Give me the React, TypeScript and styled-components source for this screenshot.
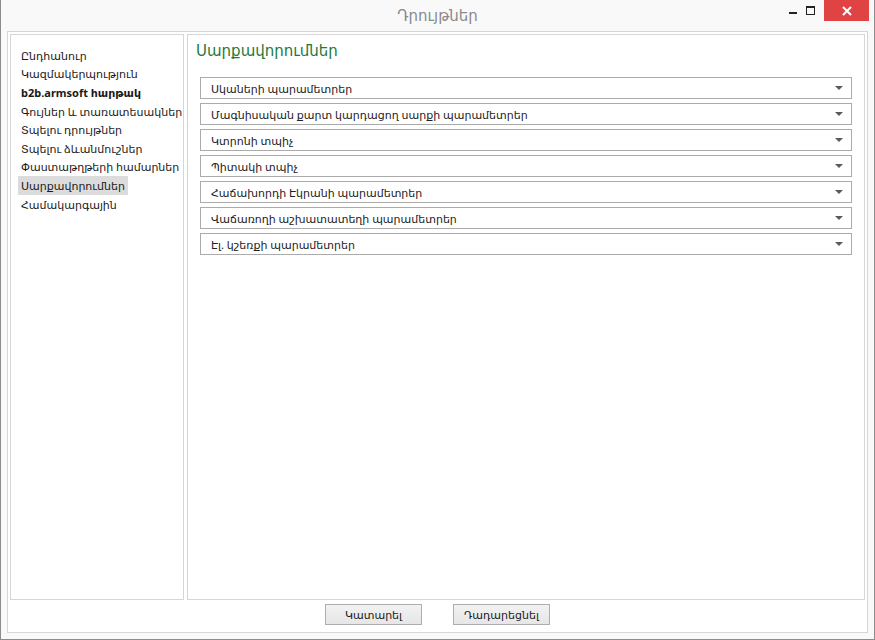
import { createGlobalStyle, styled } from "styled-components";

const GlobalStyle = createGlobalStyle`
  html, body {
    margin: 0;
    padding: 0;
    background: #ffffff;
  }
  body {
    font-family: "Noto Sans", "DejaVu Sans", sans-serif;
  }
`;

const Window = styled.div`
  width: 875px;
  height: 640px;
  box-sizing: border-box;
  border: 1px solid #8c8c8c;
  border-top: none;
  background: #f9f9f9;
  display: flex;
  flex-direction: column;
`;

const TitleBar = styled.div`
  height: 31px;
  flex: none;
  position: relative;
  display: flex;
  align-items: center;
  justify-content: center;
`;

const Title = styled.span`
  font-size: 15px;
  color: #8a8a8a;
  margin-top: -2px;
`;

const WindowControls = styled.div`
  position: absolute;
  top: 0;
  right: 5px;
  display: flex;
  align-items: flex-start;
  height: 21px;
`;

const ControlButton = styled.div`
  width: 16px;
  height: 21px;
  display: flex;
  align-items: center;
  justify-content: center;
  margin-right: 1px;
`;

const MinimizeGlyph = styled.div`
  width: 8px;
  height: 2px;
  background: #222;
  margin-top: 5px;
`;

const MaximizeGlyph = styled.div`
  width: 7px;
  height: 6px;
  border: 1px solid #222;
  border-top-width: 2px;
`;

const CloseButton = styled.div`
  width: 45px;
  height: 21px;
  margin-left: 5px;
  background: #e04343;
  display: flex;
  align-items: center;
  justify-content: center;
`;

const Body = styled.div`
  flex: 1;
  padding: 0 6px 6px 6px;
  display: flex;
`;

const Frame = styled.div`
  flex: 1;
  border: 1px solid #d6d6d6;
  background: #ffffff;
  padding: 2px 2px 0 2px;
  display: flex;
  flex-direction: column;
`;

const Panels = styled.div`
  height: 566px;
  display: flex;
  gap: 3px;
`;

const NavPanel = styled.div`
  width: 174px;
  box-sizing: border-box;
  border: 1px solid #d6d6d6;
  padding: 11px 0 0 7px;
`;

const NavList = styled.ul`
  list-style: none;
  margin: 0;
  padding: 0;
`;

const NavItem = styled.li<{ $selected?: boolean; $bold?: boolean }>`
  height: 18.6px;
  display: flex;
  align-items: center;
  white-space: nowrap;
  span {
    display: inline-block;
    padding: 0 3px;
    height: 19px;
    line-height: 19px;
    font-size: 11px;
    color: #1a1a1a;
    font-weight: ${(p) => (p.$bold ? 700 : 400)};
    background: ${(p) => (p.$selected ? "#dcdcdc" : "transparent")};
  }
`;

const ContentPanel = styled.div`
  flex: 1;
  box-sizing: border-box;
  border: 1px solid #d6d6d6;
  padding: 4px 12px 0 12px;
`;

const Heading = styled.h1`
  margin: 0 0 15px -4px;
  height: 23px;
  line-height: 23px;
  font-size: 15px;
  font-weight: 400;
  color: #217a3c;
  white-space: nowrap;
`;

const SelectList = styled.div`
  display: flex;
  flex-direction: column;
  gap: 4px;
`;

const SelectBox = styled.div`
  height: 22px;
  box-sizing: border-box;
  border: 1px solid #ababab;
  background: #ffffff;
  display: flex;
  align-items: center;
  justify-content: space-between;
  padding: 0 8px 0 10px;
`;

const SelectLabel = styled.span`
  font-size: 11px;
  color: #222;
  white-space: nowrap;
`;

const Caret = styled.span`
  width: 0;
  height: 0;
  border-left: 4px solid transparent;
  border-right: 4px solid transparent;
  border-top: 4px solid #5a5a5a;
`;

const Footer = styled.div`
  flex: 1;
  display: flex;
  justify-content: center;
  align-items: center;
  gap: 31px;
  padding-bottom: 3px;
`;

const DialogButton = styled.button`
  width: 97px;
  height: 21px;
  box-sizing: border-box;
  border: 1px solid #adadad;
  background: linear-gradient(#f2f2f2, #e6e6e6);
  font-family: inherit;
  font-size: 11px;
  color: #1a1a1a;
  padding: 0;
`;

const navItems = [
  "Ընդհանուր",
  "Կազմակերպություն",
  "b2b.armsoft հարթակ",
  "Գույներ և տառատեսակներ",
  "Տպելու դրույթներ",
  "Տպելու ձևանմուշներ",
  "Փաստաթղթերի համարներ",
  "Սարքավորումներ",
  "Համակարգային",
];

const devices = [
  "Սկաների պարամետրեր",
  "Մագնիսական քարտ կարդացող սարքի պարամետրեր",
  "Կտրոնի տպիչ",
  "Պիտակի տպիչ",
  "Հաճախորդի Էկրանի պարամետրեր",
  "Վաճառողի աշխատատեղի պարամետրեր",
  "Էլ. կշեռքի պարամետրեր",
];

export default function App() {
  return (
    <>
      <GlobalStyle />
      <Window>
        <TitleBar>
          <Title>Դրույթներ</Title>
          <WindowControls>
            <ControlButton>
              <MinimizeGlyph />
            </ControlButton>
            <ControlButton>
              <MaximizeGlyph />
            </ControlButton>
            <CloseButton>
              <svg width="10" height="10" viewBox="0 0 10 10">
                <path d="M1 1L9 9M9 1L1 9" stroke="#fff" strokeWidth="2" />
              </svg>
            </CloseButton>
          </WindowControls>
        </TitleBar>
        <Body>
          <Frame>
            <Panels>
              <NavPanel>
                <NavList>
                  {navItems.map((item, i) => (
                    <NavItem key={item} $bold={i === 2} $selected={i === 7}>
                      <span>{item}</span>
                    </NavItem>
                  ))}
                </NavList>
              </NavPanel>
              <ContentPanel>
                <Heading>Սարքավորումներ</Heading>
                <SelectList>
                  {devices.map((d) => (
                    <SelectBox key={d}>
                      <SelectLabel>{d}</SelectLabel>
                      <Caret />
                    </SelectBox>
                  ))}
                </SelectList>
              </ContentPanel>
            </Panels>
            <Footer>
              <DialogButton>Կատարել</DialogButton>
              <DialogButton>Դադարեցնել</DialogButton>
            </Footer>
          </Frame>
        </Body>
      </Window>
    </>
  );
}
